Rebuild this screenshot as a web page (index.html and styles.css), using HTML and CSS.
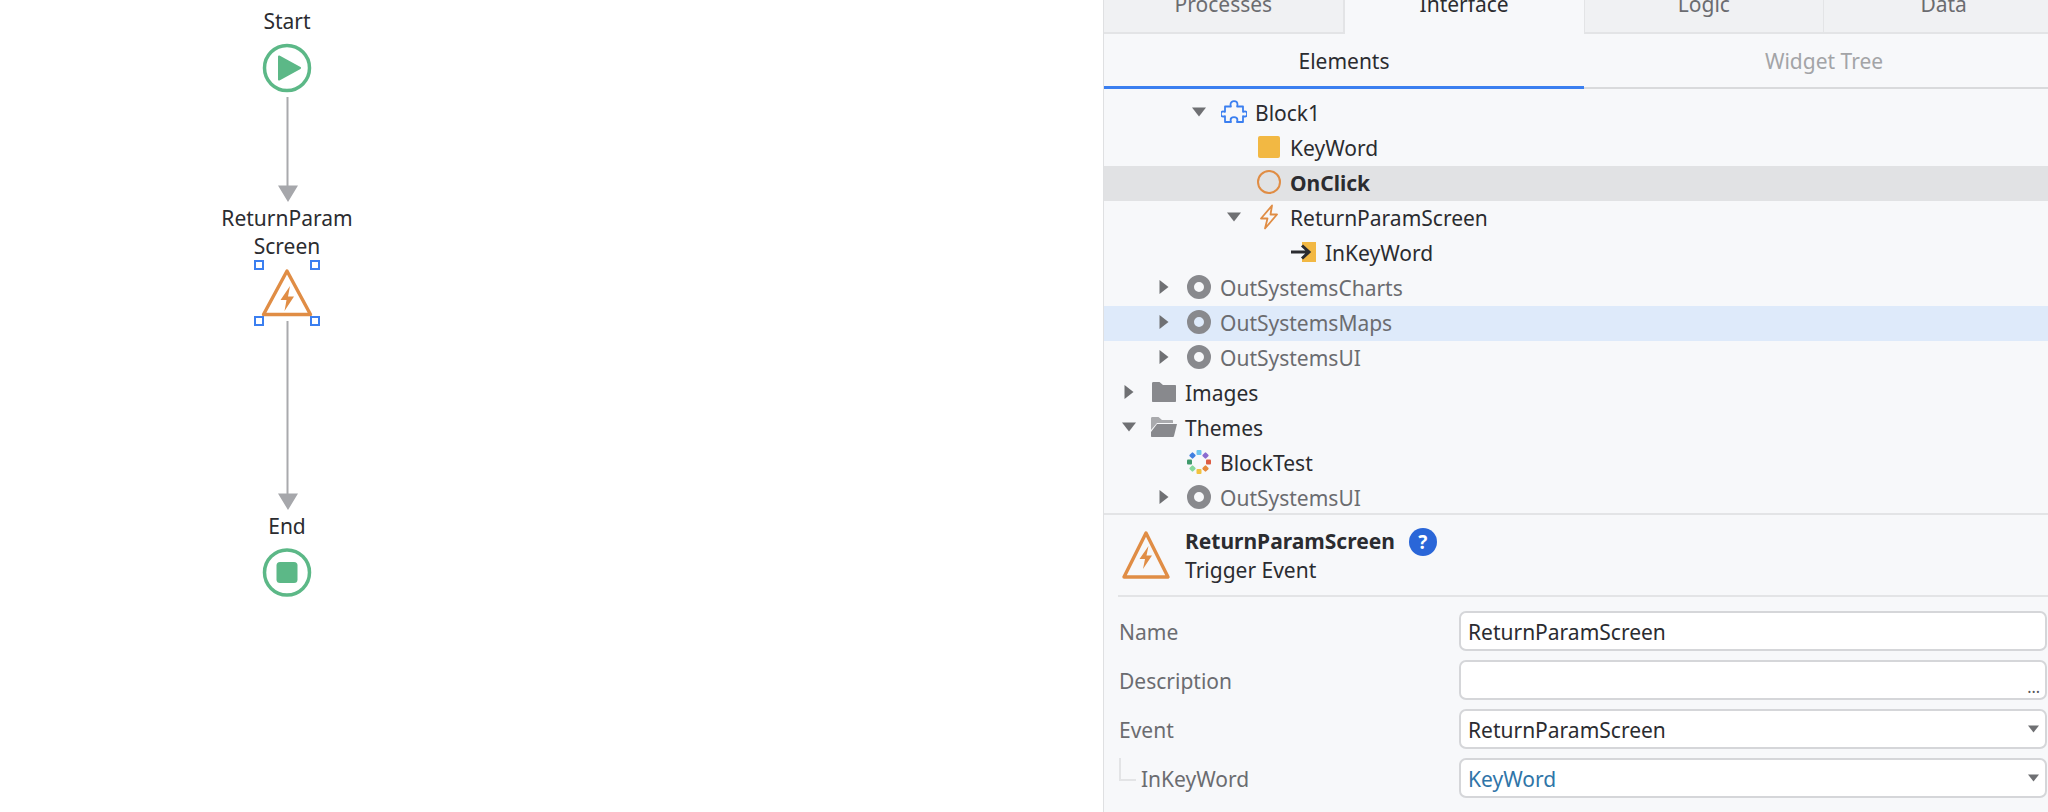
FILE: index.html
```html
<!DOCTYPE html>
<html lang="en">
<head>
<meta charset="utf-8">
<title>Flow editor</title>
<link rel="stylesheet" href="styles.css">
</head>
<body>
<svg class="defs" width="0" height="0" aria-hidden="true">
  <defs>
    <symbol id="donut" viewBox="0 0 24 24"><circle cx="12" cy="12" r="8.5" fill="none" stroke="#88898d" stroke-width="7"/></symbol>
    <symbol id="caret-right" viewBox="0 0 10 14"><path d="M.5 0 9.500 7 .5 14z" fill="#6f7073"/></symbol>
    <symbol id="caret-down" viewBox="0 0 14 10"><path d="M0 .5h14L7 9.500z" fill="#6f7073"/></symbol>
    <symbol id="warn" viewBox="0 0 50 50"><path d="M25 3 47 47H3z" fill="none" stroke="#e08d45" stroke-width="3.4" stroke-linejoin="round"/><path d="M27.5 16 18.5 29h5.5l-2 10 9-13.500h-5.500z" fill="#e08d45"/></symbol>
  </defs>
</svg>
<main class="app">
  <section class="canvas">
    <svg class="flow" width="574" height="640" viewBox="0 0 574 640">
      <circle cx="287" cy="68" r="22.500" fill="#fff" stroke="#5cb887" stroke-width="3.500"/>
      <path d="M279 56.500 300 68 279 79.500z" fill="#5cb887" stroke="#5cb887" stroke-width="2" stroke-linejoin="round"/>
      <path d="M287.500 97V186M287.500 321V494" stroke="#a9aaad" stroke-width="2" fill="none"/>
      <path d="M278 185.500h20L288 202zM278 493.500h20L288 510z" fill="#a6a7ab"/>
      <path d="M287 271 310.500 314.500H263.500z" fill="#fff" stroke="#e08d45" stroke-width="3.400" stroke-linejoin="round"/>
      <path d="M290 286 280.500 300h6l-2 11 9.500-14.500h-6z" fill="#e08d45"/>
      <g fill="#fff" stroke="#3b7ff0" stroke-width="2">
        <rect x="255" y="261" width="8" height="8"/>
        <rect x="311" y="261" width="8" height="8"/>
        <rect x="255" y="317" width="8" height="8"/>
        <rect x="311" y="317" width="8" height="8"/>
      </g>
      <circle cx="287" cy="572.500" r="22.500" fill="#fff" stroke="#5cb887" stroke-width="3.500"/>
      <rect x="276.500" y="562" width="21" height="21" rx="3.500" fill="#5cb887"/>
    </svg>
    <div class="node-label label-start">Start</div>
    <div class="node-label label-event">ReturnParam<br>Screen</div>
    <div class="node-label label-end">End</div>
  </section>

  <aside class="panel">
    <nav class="tabs">
      <div class="tab">Processes</div>
      <div class="tab tab-active">Interface</div>
      <div class="tab">Logic</div>
      <div class="tab">Data</div>
    </nav>
    <nav class="subtabs">
      <div class="subtab subtab-active">Elements</div>
      <div class="subtab">Widget Tree</div>
    </nav>
    <div class="tree">
      <div class="row l2">
        <span class="twisty"><svg class="caret-d"><use href="#caret-down"/></svg></span>
        <span class="ico"><svg width="26" height="26" viewBox="0 0 26 26"><path d="M9.500 5.500C9.500 1 16.500 1 16.500 5.500c0 .8-.4 1.300-.4 2H22v5.300c.8 0 1.300-.4 2-.4 2.800 0 2.800 5.200 0 5.200-.7 0-1.200-.4-2-.4V23h-6c0-.8.4-1.300.4-2.100 0-3.600-6.800-3.600-6.800 0 0 .8.400 1.300.4 2.100H4v-5.800c-.8 0-1.300.4-2 .4-2.800 0-2.800-5.200 0-5.200.7 0 1.200.4 2 .4V7.500h5.900c0-.7-.4-1.200-.4-2z" fill="none" stroke="#3b7ff0" stroke-width="1.800" stroke-linejoin="round"/></svg></span>
        <span class="name">Block1</span>
      </div>
      <div class="row l3">
        <span class="twisty"></span>
        <span class="ico"><span class="sq"></span></span>
        <span class="name">KeyWord</span>
      </div>
      <div class="row l3 row-active">
        <span class="twisty"></span>
        <span class="ico"><span class="ring"></span></span>
        <span class="name bold">OnClick</span>
      </div>
      <div class="row l3">
        <span class="twisty"><svg class="caret-d"><use href="#caret-down"/></svg></span>
        <span class="ico"><svg width="20" height="26" viewBox="0 0 20 26"><path d="M13 1.500 2 14.500h6.500L6 24.500 18 10.500h-6.500z" fill="none" stroke="#e08d45" stroke-width="1.800" stroke-linejoin="round"/></svg></span>
        <span class="name">ReturnParamScreen</span>
      </div>
      <div class="row l4">
        <span class="twisty"></span>
        <span class="ico"><svg width="26" height="22" viewBox="0 0 26 22"><path d="M11 1h14v20H11v-4l5-6-5-6z" fill="#f2b843"/><path d="M0 11h17M11 4.500l7 6.500-7 6.500" fill="none" stroke="#2b2c30" stroke-width="3"/></svg></span>
        <span class="name">InKeyWord</span>
      </div>
      <div class="row l1 muted">
        <span class="twisty"><svg class="caret-r"><use href="#caret-right"/></svg></span>
        <span class="ico"><svg class="donut"><use href="#donut"/></svg></span>
        <span class="name">OutSystemsCharts</span>
      </div>
      <div class="row l1 muted row-hover">
        <span class="twisty"><svg class="caret-r"><use href="#caret-right"/></svg></span>
        <span class="ico"><svg class="donut"><use href="#donut"/></svg></span>
        <span class="name">OutSystemsMaps</span>
      </div>
      <div class="row l1 muted">
        <span class="twisty"><svg class="caret-r"><use href="#caret-right"/></svg></span>
        <span class="ico"><svg class="donut"><use href="#donut"/></svg></span>
        <span class="name">OutSystemsUI</span>
      </div>
      <div class="row l0">
        <span class="twisty"><svg class="caret-r"><use href="#caret-right"/></svg></span>
        <span class="ico"><svg width="26" height="22" viewBox="0 0 26 22"><path d="M1 2.500C1 1.500 1.500 1 2.500 1h6L12 4h12c.6 0 1 .4 1 1v15c0 .6-.4 1-1 1H2c-.6 0-1-.4-1-1z" fill="#88898d"/></svg></span>
        <span class="name">Images</span>
      </div>
      <div class="row l0">
        <span class="twisty"><svg class="caret-d"><use href="#caret-down"/></svg></span>
        <span class="ico"><svg width="28" height="22" viewBox="0 0 28 22"><path d="M1 2.500C1 1.500 1.500 1 2.500 1h6L12 4h10c.6 0 1 .4 1 1v2H7L1 14z" fill="#a9aaad"/><path d="M7 8h20l-3 12c-.2.6-.5 1-1 1H2c-.6 0-1-.4-1-1v-4z" fill="#88898d"/></svg></span>
        <span class="name">Themes</span>
      </div>
      <div class="row l1">
        <span class="twisty"></span>
        <span class="ico"><svg width="24" height="24" viewBox="0 0 24 24">
          <rect x="9.500" y="0" width="5" height="5" rx="1" fill="#6cc5ee"/>
          <rect x="16" y="3" width="5" height="5" rx="1" transform="rotate(45 18.500 5.500)" fill="#8a6bd0"/>
          <rect x="19" y="9.500" width="5" height="5" rx="1" fill="#dd5c43"/>
          <rect x="16" y="16" width="5" height="5" rx="1" transform="rotate(45 18.500 18.500)" fill="#e58a3c"/>
          <rect x="9.500" y="19" width="5" height="5" rx="1" fill="#f2c23f"/>
          <rect x="3" y="16" width="5" height="5" rx="1" transform="rotate(45 5.500 18.500)" fill="#86d89c"/>
          <rect x="0" y="9.500" width="5" height="5" rx="1" fill="#3f9a6b"/>
          <rect x="3" y="3" width="5" height="5" rx="1" transform="rotate(45 5.500 5.500)" fill="#3f7fe0"/>
        </svg></span>
        <span class="name">BlockTest</span>
      </div>
      <div class="row l1 muted">
        <span class="twisty"><svg class="caret-r"><use href="#caret-right"/></svg></span>
        <span class="ico"><svg class="donut"><use href="#donut"/></svg></span>
        <span class="name">OutSystemsUI</span>
      </div>
    </div>
    <section class="props">
      <header class="props-head">
        <svg class="props-icon"><use href="#warn"/></svg>
        <div class="props-titles">
          <div class="props-title"><strong>ReturnParamScreen</strong><span class="help">?</span></div>
          <div class="props-sub">Trigger Event</div>
        </div>
      </header>
      <div class="form">
        <label class="flabel">Name</label>
        <div class="field">ReturnParamScreen</div>
        <label class="flabel">Description</label>
        <div class="field"><span class="dots">...</span></div>
        <label class="flabel">Event</label>
        <div class="field">ReturnParamScreen<svg class="fcaret"><use href="#caret-down"/></svg></div>
        <label class="flabel flabel-sub"><span class="elbow"></span>InKeyWord</label>
        <div class="field field-link">KeyWord<svg class="fcaret"><use href="#caret-down"/></svg></div>
      </div>
    </section>
  </aside>
</main>
</body>
</html>
```
FILE: styles.css
```css
* { box-sizing: border-box; }
html, body { margin: 0; height: 100%; overflow: hidden; background: #fff; }
body { font-family: "Noto Sans", "Open Sans", sans-serif; font-size: 21px; color: #2b2c30; }
.defs { position: absolute; }

.app { display: flex; height: 812px; width: 2048px; }

.canvas { position: relative; flex: 0 0 1103px; background: #fff; }
.flow { position: absolute; left: 0; top: 0; }
.node-label { position: absolute; left: 187px; width: 200px; text-align: center; line-height: 28px; }
.label-start { top: 7px; }
.label-event { top: 204px; }
.label-end { top: 512px; }

.panel { flex: 0 0 945px; border-left: 1px solid #dfe0e2; background: #f7f8fa; overflow: hidden; display: flex; flex-direction: column; }

.tabs { display: flex; width: 960px; height: 34px; flex: none; }
.tab { flex: 1; display: flex; align-items: flex-end; justify-content: center; line-height: 28px; padding-bottom: 14px; overflow: hidden; background: #f0f1f3; color: #6b6c70; border-bottom: 2px solid #e3e4e6; border-right: 1px solid #e3e4e6; }
.tab-active { background: #f7f8fa; color: #2b2c30; padding-bottom: 16px; border-bottom: none; border-left: 1px solid #e3e4e6; }

.subtabs { display: flex; width: 960px; height: 55px; flex: none; }
.subtab { flex: 1; display: flex; align-items: center; justify-content: center; color: #a3a4a7; border-bottom: 2px solid #d9dadc; padding-top: 1px; }
.subtab-active { color: #2b2c30; border-bottom: 3px solid #3b7ff0; }

.tree { height: 424px; flex: none; padding-top: 7px; overflow: hidden; }
.row { display: flex; align-items: center; height: 35px; padding-bottom: 3px; }
.l0 { padding-left: 8px; }
.l1 { padding-left: 43px; }
.l2 { padding-left: 78px; }
.l3 { padding-left: 113px; }
.l4 { padding-left: 148px; }
.row-active { background: #e1e2e4; }
.row-hover { background: #deeafa; }
.muted { color: #6b6c70; }
.twisty { flex: 0 0 34px; display: flex; align-items: center; justify-content: center; }
.caret-d { width: 14px; height: 10px; }
.caret-r { width: 10px; height: 14px; }
.ico { flex: 0 0 36px; height: 32px; display: flex; align-items: center; justify-content: center; margin-right: 3px; }
.donut { width: 24px; height: 24px; }
.sq { width: 22px; height: 22px; background: #f2b843; border-radius: 2px; }
.ring { width: 24px; height: 24px; border: 2px solid #e08d45; border-radius: 50%; }
.name { white-space: nowrap; padding-top: 2px; }
.bold { font-weight: 700; }

.props { flex: 1; border-top: 2px solid #e3e4e6; }
.props-head { display: flex; align-items: center; height: 82px; margin-left: 14px; border-bottom: 2px solid #e3e4e6; }
.props-icon { width: 50px; height: 50px; margin: 0 14px 0 3px; }
.props-titles { display: flex; flex-direction: column; line-height: 29px; padding-top: 2px; }
.props-title { display: flex; align-items: center; }
.help { width: 28px; height: 28px; margin-left: 14px; border-radius: 50%; background: #2a66d8; color: #fff; font-weight: 700; font-size: 19px; line-height: 28px; text-align: center; }
.form { display: grid; grid-template-columns: 340px 1fr; row-gap: 9px; padding: 14px 1px 0 15px; }
.flabel { display: flex; align-items: center; color: #6b6c70; height: 40px; padding-top: 2px; }
.flabel-sub { padding-left: 22px; position: relative; }
.elbow { position: absolute; left: 0; top: 0; width: 17px; height: 23px; border-left: 2px solid #e3e4e6; border-bottom: 2px solid #e3e4e6; }
.field { position: relative; display: flex; align-items: center; height: 40px; padding: 2px 0 0 7px; background: #fff; border: 2px solid #d5d6d9; border-radius: 7px; }
.field-link { color: #2f75a8; }
.dots { position: absolute; right: 5px; bottom: 0; font-size: 16px; line-height: 22px; color: #55565a; }
.fcaret { position: absolute; right: 6px; top: 14px; width: 11px; height: 8px; }
```
